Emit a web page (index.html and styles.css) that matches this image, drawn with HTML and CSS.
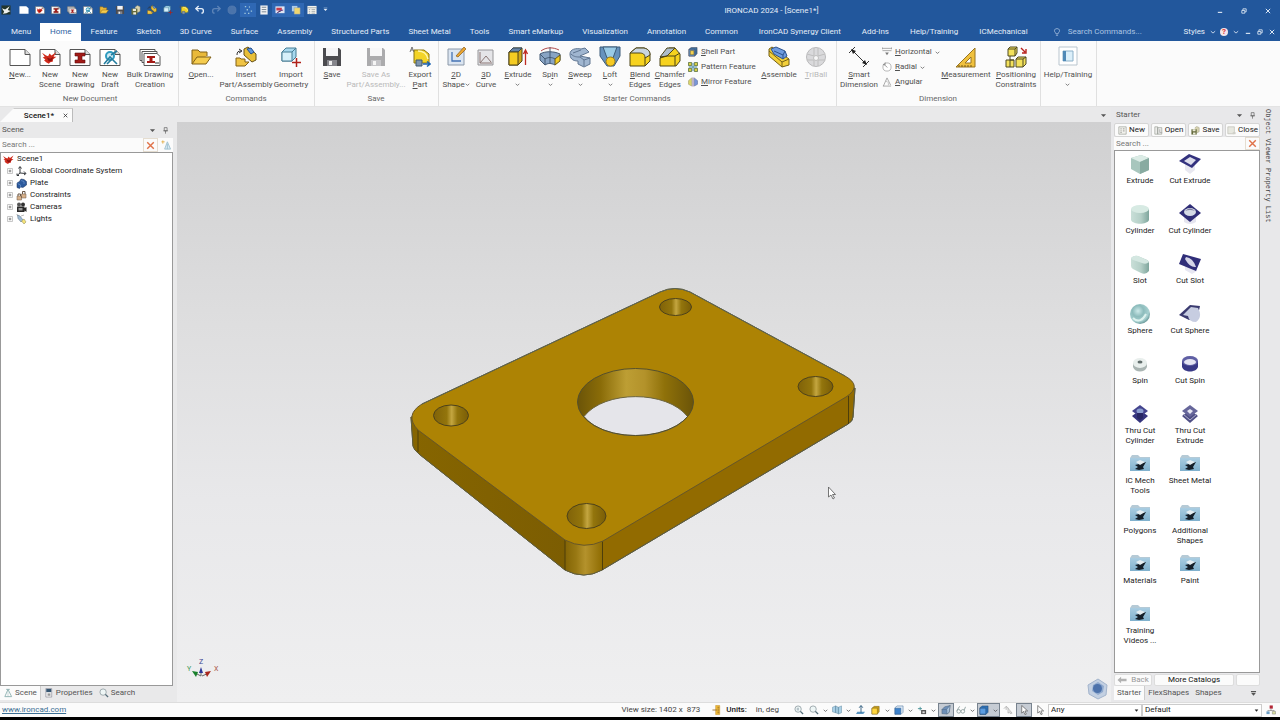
FILE: index.html
```html
<!DOCTYPE html>
<html lang="en">
<head>
<meta charset="utf-8">
<title>IRONCAD 2024 - [Scene1*]</title>
<link rel="stylesheet" href="styles.css">
</head>
<body>
<svg class="defs" aria-hidden="true">
  <defs>
    <linearGradient id="gWall" x1="0" x2="1"><stop offset="0" stop-color="#6b5408"/><stop offset=".2" stop-color="#8a6c08"/><stop offset=".42" stop-color="#bd9e34"/><stop offset=".58" stop-color="#b3922a"/><stop offset=".75" stop-color="#8f7109"/><stop offset="1" stop-color="#6b5408"/></linearGradient>
    <linearGradient id="gHole" x1="0" x2="1"><stop offset="0" stop-color="#806208"/><stop offset=".38" stop-color="#93750c"/><stop offset=".52" stop-color="#c4a640"/><stop offset=".68" stop-color="#93750c"/><stop offset="1" stop-color="#7a5d06"/></linearGradient>
    <linearGradient id="gCorner" x1="0" x2="1"><stop offset="0" stop-color="#836405"/><stop offset=".3" stop-color="#987813"/><stop offset=".55" stop-color="#b4922c"/><stop offset="1" stop-color="#8f6c02"/></linearGradient>
    <linearGradient id="gSide" x1="0" x2="1"><stop offset="0" stop-color="#866500"/><stop offset="1" stop-color="#7c5d02"/></linearGradient>
    <linearGradient id="gMint" x1="0" x2="1"><stop offset="0" stop-color="#c9dfd8"/><stop offset=".55" stop-color="#b4cfc7"/><stop offset="1" stop-color="#7fa69d"/></linearGradient>
    <radialGradient id="gBall" cx=".4" cy=".35" r=".7"><stop offset="0" stop-color="#cdeaea"/><stop offset=".4" stop-color="#8dbcbc"/><stop offset=".75" stop-color="#a6d0d0"/><stop offset="1" stop-color="#5b8b8b"/></radialGradient>
    <linearGradient id="gFold" x1="0" y1="0" x2="0" y2="1"><stop offset="0" stop-color="#a9cde2"/><stop offset="1" stop-color="#7fb0cd"/></linearGradient>
  </defs>
  <symbol id="page" viewBox="0 0 22 22"><path d="M1 3.500h15l5 5v11H1z" fill="#fff" stroke="#555"/><path d="M16 3.500v5h5" fill="#ddd" stroke="#555"/></symbol>
  <symbol id="splat" viewBox="0 0 22 22"><path d="M0 4l6 4 3 1 2-4 3 3 7-5-4 7 4 0-5 4 0 3-4 1-2 2-4-2-3-3 2-1-4-3 3-1z" fill="#d02a1c"/><path d="M7 11l5 2 5-3-3 6-4 1z" fill="#8c1210"/></symbol>
  <symbol id="scene" viewBox="0 0 22 22"><use href="#page"/><use href="#splat" x="3" y="4" width="15" height="15"/></symbol>
  <symbol id="beam" viewBox="0 0 22 22"><path d="M6 7h10v3h-3v4h3v3H6v-3h3v-4H6z" fill="#a31b17" stroke="#5b0f0d" stroke-width=".6"/></symbol>
  <symbol id="drawing" viewBox="0 0 22 22"><use href="#page"/><use href="#beam"/></symbol>
  <symbol id="draft" viewBox="0 0 22 22"><use href="#page"/><circle cx="11" cy="10" r="4" fill="#cfeaf4" stroke="#2f9cc0" stroke-width="2"/><path d="M5 18l6-7 2 2-5 5M12 9l6-4M13 13l5 5" fill="none" stroke="#247d9f" stroke-width="1.600"/></symbol>
  <symbol id="bulk" viewBox="0 0 22 22"><path d="M1 3.500h15v11H1z" fill="#fff" stroke="#555"/><path d="M3 5.500h15v11H3z" fill="#fff" stroke="#555"/><path d="M5 7.500h13l3 3v9H5z" fill="#fff" stroke="#555"/><path d="M8 10h8v2h-2.500v3H16v2H8v-2h2.500v-3H8z" fill="#a31b17"/><path d="M16 16h4v2h-4z" fill="#999"/></symbol>
  <symbol id="open" viewBox="0 0 22 22"><path d="M2 18V4h6l2 2h7v4" fill="#e9b93a" stroke="#806018"/><path d="M2 18l5-7h14l-5 7z" fill="#f5cc4e" stroke="#806018"/></symbol>
  <symbol id="insert" viewBox="0 0 22 22"><path d="M1 20v-8h4l1 1h4v3h4l-4 4z" fill="#f0c445" stroke="#806018"/><path d="M9 3l4-2 8 7v6l-4 2-8-7z" fill="#e8bf38" stroke="#665018"/><path d="M12 3l4-1 3 4-3 2z" fill="#5f95dc" stroke="#234e8c"/><path d="M2 9c0-3 1-4 4-4M4 3l3 2-3 2" fill="none" stroke="#333"/></symbol>
  <symbol id="import" viewBox="0 0 22 22"><path d="M2 6l4-4h10v9l-4 4H2z" fill="#a8d8ee" stroke="#467c94"/><path d="M2 6h10v9H2z" fill="#d7f0fa" stroke="#467c94"/><path d="M12 6l4-4" stroke="#467c94"/><path d="M16.500 12v9M12 16.500h9" stroke="#b02018" stroke-width="1.500"/></symbol>
  <symbol id="save" viewBox="0 0 22 22"><path d="M2 2h16l2 2v16H2z" fill="#4b4b4f"/><path d="M5 2h12v8H5z" fill="#f4f4f6"/><path d="M6 14h10v6H6z" fill="#85858b"/><path d="M8 15h3v4H8z" fill="#eee"/></symbol>
  <symbol id="export" viewBox="0 0 22 22"><path d="M5 4h10l5 4v9H5z" fill="#f3d427" stroke="#8a7412"/><path d="M9 5c5 0 9 3 10 8" fill="none" stroke="#fff7b0" stroke-width="1.500"/><path d="M7 14h6v6H7z" fill="#7f96ae" stroke="#40566c"/><path d="M14 18h6M18 15.500l3 2.500-3 2.500" fill="none" stroke="#1c62b0" stroke-width="1.500"/><path d="M1 6l2-5 2 5M2 4h2" fill="none" stroke="#555" stroke-width=".8"/></symbol>
  <symbol id="shape2d" viewBox="0 0 22 22"><path d="M3 3h16v16H3z" fill="#dbe5f1" stroke="#8b98a8"/><path d="M7 6v9h9" fill="none" stroke="#4673b4" stroke-width="1.300"/><path d="M11 10l8-9 2 2-8 8z" fill="#eba630" stroke="#8a5a18" stroke-width=".7"/></symbol>
  <symbol id="curve3d" viewBox="0 0 22 22"><path d="M3 4h15v15H3z" fill="#e5e5e8" stroke="#969699"/><path d="M5 6v11h12M5 17l6-7 5 6" fill="none" stroke="#8b7775"/></symbol>
  <symbol id="extrude" viewBox="0 0 22 22"><path d="M2 6l4-4h9v13l-4 4H2z" fill="#d1a719" stroke="#4c4318"/><path d="M2 6l4-4h9l-4 4z" fill="#6784a5" stroke="#37485b"/><path d="M2 6h9v13H2z" fill="#f5cc22" stroke="#4c4318"/><path d="M18.500 19V5M16.500 8l2-4 2 4" fill="none" stroke="#bf2a22" stroke-width="1.300"/></symbol>
  <symbol id="spin" viewBox="0 0 22 22"><path d="M1 8c5-3 14-3 20 0v6l-5 5c-4-2-7-2-10 0l-5-5z" fill="#88a4c4" stroke="#435973"/><path d="M16 13l5-4v6l-5 4z" fill="#f2cb21" stroke="#6b5b18"/><path d="M1 8l5 5v6M6 13c3-2 7-2 10 0M11 1v17" fill="none" stroke="#435973"/><path d="M2 5c5-4 12-4 18-1" fill="none" stroke="#b04949"/></symbol>
  <symbol id="sweep" viewBox="0 0 22 22"><path d="M1 8c0-5 6-6 11-5l4-1 4 4-9 4 10 2v6l-6 3-6-3v-3c-6 0-8-3-8-7z" fill="#a0b6d0" stroke="#607692"/><path d="M2 8c3 3 6 3 9 3l4 3v6M15 14l6-2M4 7l8-3" fill="none" stroke="#607692"/></symbol>
  <symbol id="loft" viewBox="0 0 22 22"><path d="M1 1h20v9l-6 10H8L1 10z" fill="#6692bd" stroke="#3b5b78"/><path d="M4 1h14l-4 11H8z" fill="#9acbe6" stroke="#3b5b78"/><circle cx="11.500" cy="15.500" r="4.500" fill="#f6ca23" stroke="#9b7a18"/></symbol>
  <symbol id="blend" viewBox="0 0 22 22"><path d="M1 7l6-5h8c4 1 6 3 6 7v6l-5 5H1z" fill="#f6d21f" stroke="#4d4417"/><path d="M7 2h8c4 1 6 3 6 7l-5 3c0-4-2-5-6-5H1z" fill="#c9d5df" stroke="#4d4417"/><path d="M16 12v8" stroke="#4d4417"/></symbol>
  <symbol id="chamfer" viewBox="0 0 22 22"><path d="M1 12l6-5 3-5h6l5 6v7l-4 5H1z" fill="#f6d21f" stroke="#4d4417"/><path d="M1 11l7-9h8l-8 8z" fill="#aebdcb" stroke="#4d4417"/><path d="M8 10h8l5-3M16 10v10M8 10l-7 2" fill="none" stroke="#4d4417"/></symbol>
  <symbol id="shell" viewBox="0 0 22 22"><path d="M2 5l5-4h13v14l-5 5H2z" fill="#41719f" stroke="#334"/><path d="M2 5h13v15H2z" fill="#6d9ccf" stroke="#334"/><path d="M5 8h8v9H5z" fill="#f5d252" stroke="#55481a"/></symbol>
  <symbol id="pattern" viewBox="0 0 22 22"><path d="M1 1h7v7H1zM14 1h7v7h-7zM1 14h7v7H1zM14 14h7v7h-7z" fill="#d9cf42" stroke="#3d5c31" stroke-width="1.500"/><path d="M11 2v18M2 11h18" stroke="#3b80a0" stroke-width="2"/></symbol>
  <symbol id="mirror" viewBox="0 0 22 22"><path d="M8 2v18l-7-4V8z" fill="#d8d36b" stroke="#8f8c55"/><path d="M14 2v18l7-4V8z" fill="#7995d7" stroke="#46588c"/><path d="M11 1v20" stroke="#7d679c" stroke-width="2"/></symbol>
  <symbol id="assemble" viewBox="0 0 22 22"><path d="M1 3l3-2 17 12v6l-7 2L1 10z" fill="#f3d03a" stroke="#746018"/><path d="M1 5l13 11 7-3M14 16v5" fill="none" stroke="#746018"/><path d="M3 3l5-2 9 4 2 5-4 3-9-5z" fill="#6f9ce0" stroke="#2c538f"/><path d="M6 5l9 4 2-4M15 9v4" fill="none" stroke="#2c538f"/></symbol>
  <symbol id="triball" viewBox="0 0 22 22"><circle cx="11" cy="11" r="9.500" fill="#b4b4b8" stroke="#6c6c70"/><path d="M2 8l7 2V2M13 2v8l7-2M2 14h7v6M13 20v-6h7" fill="none" stroke="#777"/><circle cx="11" cy="12" r="2.500" fill="#f3f3f3" stroke="#777"/></symbol>
  <symbol id="smart" viewBox="0 0 22 22"><path d="M4 4l14 14M1 7l6-6M15 21l6-6" stroke="#333"/><path d="M3 3l5 2-3 3zM19 19l-5-2 3-3z" fill="#222"/></symbol>
  <symbol id="horiz" viewBox="0 0 22 22"><path d="M1 3h20M1 8h20M1 1v4M21 1v4" stroke="#888" stroke-width="1.500"/><path d="M7 12h8l-4 6z" fill="#777"/></symbol>
  <symbol id="radial" viewBox="0 0 22 22"><circle cx="11" cy="11" r="9" fill="#fff" stroke="#999" stroke-width="1.500"/><path d="M4 5l8 7M2 6h5V1" stroke="#777" fill="none" stroke-width="1.500"/></symbol>
  <symbol id="angular" viewBox="0 0 22 22"><path d="M2 20h18M3 20L11 2l8 16" fill="none" stroke="#888" stroke-width="1.500"/><path d="M8 9c5 0 7 5 6 9" fill="none" stroke="#aaa" stroke-width="1.500"/></symbol>
  <symbol id="measure" viewBox="0 0 22 22"><path d="M1 21L20 2v19z" fill="#f0c13e" stroke="#987421"/><path d="M10 17l6-6v6z" fill="#fff" stroke="#987421"/><path d="M4 21v-2m3 2v-2m3 2v-2m3 2v-2m3 2v-2" stroke="#775917"/></symbol>
  <symbol id="position" viewBox="0 0 22 22"><path d="M3 3l2-2h7v6l-2 3H3zM1 14h8v7H1zM11 13l2-2h8v7l-3 3h-7z" fill="#f4e25c" stroke="#4f4a24"/><path d="M3 3h7v7M10 3l2-2M11 13h7v8M18 13l3-2M5 14v7M5 10v4h4" fill="none" stroke="#4f4a24"/><path d="M16 2l4 4M17 7h4V3" fill="none" stroke="#b8201c" stroke-width="1.400"/></symbol>
  <symbol id="help" viewBox="0 0 22 22"><path d="M2 1h18v18H2z" fill="#fff" stroke="#b9c5ce"/><path d="M6 5h10v10H6z" fill="#dbeffa" stroke="#8bb0c9"/><path d="M6 5h3v10H6z" fill="#4f89b7"/></symbol>
  <symbol id="app" viewBox="0 0 22 22"><path d="M1 1h20v20H1z" fill="#21342c"/><path d="M2 7l7 3 10-7-4 8 6 2-9 5-8 1 3-4z" fill="#eef1ee"/></symbol>
  <symbol id="blank" viewBox="0 0 22 22"><path d="M1 3h15l5 4v12H1z" fill="#fff"/></symbol>
  <symbol id="undo" viewBox="0 0 22 22"><path d="M3 8h11c6 0 6 10 0 10M8 2L2 8l6 6" fill="none" stroke="currentColor" stroke-width="3"/></symbol>
  <symbol id="ball" viewBox="0 0 22 22"><circle cx="11" cy="11" r="9" fill="#4b74ab" stroke="#6788b5"/></symbol>
  <symbol id="dots" viewBox="0 0 22 22"><path d="M4 2h3v3H4zM13 3h2v3h-2zM8 9h3v3H8zM3 17h3v3H3zM11 17h3v3h-3zM17 12h3v3h-3z" fill="#9fc6dc"/></symbol>
  <symbol id="list" viewBox="0 0 22 22"><path d="M3 1h16v20H3z" fill="#f2f2f2"/><path d="M6 5h10M6 10h10M6 15h10" stroke="#71808e" stroke-width="2"/></symbol>
  <symbol id="flag" viewBox="0 0 22 22"><path d="M1 3h20v15H1z" fill="#dfe5f4"/><path d="M3 6h12v6H3z" fill="#c73b4b"/><path d="M4 18l6-5 8-2" stroke="#6d3b88" stroke-width="2"/></symbol>
  <symbol id="stack" viewBox="0 0 22 22"><path d="M2 2h12v12H2z" fill="#aecbe8"/><path d="M7 6h13v14H7z" fill="#f0d66e" stroke="#8a9eb4"/></symbol>
  <symbol id="table" viewBox="0 0 22 22"><path d="M1 2h20v18H1z" fill="#f4f4ee"/><path d="M1 6h20M4 10h3M10 10h8M4 14h3M10 14h8M4 18h3M10 18h8" stroke="#8b9499" stroke-width="1.500"/></symbol>
  <symbol id="tree" viewBox="0 0 22 22"><path d="M7 3h8M11 3l-7 16h15z" fill="none" stroke="#8eb2b2" stroke-width="2"/><path d="M11 6v13" stroke="#8eb2b2"/></symbol>
  <symbol id="treenew" viewBox="0 0 22 22"><path d="M14 4L8 20h13zM14 8v12" fill="#dcebf3" stroke="#9dbfce" stroke-width="2"/><path d="M4 1v7M1 4h7" stroke="#e3b04a" stroke-width="2"/></symbol>
  <symbol id="props" viewBox="0 0 22 22"><path d="M4 1h13v19H4z" fill="#efefef" stroke="#667"/><path d="M5 2h11v7H5z" fill="#345571"/><path d="M8 12h6v5H8z" fill="#999"/></symbol>
  <symbol id="mag" viewBox="0 0 22 22"><circle cx="9" cy="9" r="7" fill="#eef6f6" stroke="#8a979c" stroke-width="1.700"/><path d="M14 14l6 6" stroke="#536c78" stroke-width="3"/></symbol>
  <symbol id="magbox" viewBox="0 0 22 22"><use href="#mag"/><path d="M6 6h5v6H6z" fill="#b8c4ca"/></symbol>
  <symbol id="x" viewBox="0 0 22 22"><path d="M3 3l16 16M19 3L3 19" stroke="currentColor" stroke-width="3.500"/></symbol>
  <symbol id="down" viewBox="0 0 22 22"><path d="M3 7h16l-8 9z" fill="currentColor"/></symbol>
  <symbol id="downbar" viewBox="0 0 22 22"><path d="M3 3h16v3H3zM3 9h16l-8 9z" fill="currentColor"/></symbol>
  <symbol id="chev" viewBox="0 0 22 22"><path d="M3 8l8 7 8-7" fill="none" stroke="currentColor" stroke-width="3"/></symbol>
  <symbol id="pin" viewBox="0 0 22 22"><path d="M7 2h9v10H7zM4 12h15M11 12v9" fill="none" stroke="#555" stroke-width="2"/></symbol>
  <symbol id="min" viewBox="0 0 22 22"><path d="M3 16h16" stroke="currentColor" stroke-width="4"/></symbol>
  <symbol id="restore" viewBox="0 0 22 22"><path d="M3 9h11v10H3zM7 9V3h12v11h-5" fill="none" stroke="currentColor" stroke-width="3"/></symbol>
  <symbol id="bulb" viewBox="0 0 22 22"><path d="M8 16c0-4-4-4-4-9 0-7 14-7 14 0 0 5-4 5-4 9zM8 20h6" fill="none" stroke="#b8cce6" stroke-width="2"/></symbol>
  <symbol id="plus" viewBox="0 0 22 22"><path d="M2 2h18v18H2z" fill="#fff" stroke="#aaa" stroke-width="2.500"/><path d="M6 11h10M11 6v10" stroke="#555" stroke-width="2.500"/></symbol>
  <symbol id="coord" viewBox="0 0 22 22"><path d="M8 2v12l11 1M8 14l-6 5M5 5l3-4 3 4M16 11l4 4-4 3M2 15v4h4" fill="none" stroke="#363a3e" stroke-width="2"/></symbol>
  <symbol id="part" viewBox="0 0 22 22"><path d="M2 10l5-3 3-5 6 1 5 4v7l-7 5-5-1-2 3-5-2z" fill="#2c5a9d" stroke="#152f5a"/><path d="M10 5l6 2v5M3 11l6 3v6" fill="none" stroke="#81a9df"/></symbol>
  <symbol id="locks" viewBox="0 0 22 22"><path d="M2 12h9v8H2zM11 8h9v8h-9z" fill="#d7b18a" stroke="#695747"/><path d="M4 12V8h5v4M13 8V3h5v5" fill="none" stroke="#695747" stroke-width="2"/></symbol>
  <symbol id="camera" viewBox="0 0 22 22"><circle cx="6" cy="5" r="4" fill="#555"/><circle cx="14" cy="5" r="4" fill="#333"/><path d="M2 9h15v11H2zM17 12l4-2v10l-4-3z" fill="#292929"/><path d="M5 12h8v5H5z" fill="#999"/></symbol>
  <symbol id="light" viewBox="0 0 22 22"><path d="M3 2l5 2 6 8-4 4-6-7z" fill="#9fbbd4" stroke="#536d84"/><path d="M11 14l5-4 4 6-4 4z" fill="#f6e479" stroke="#8b8556"/><path d="M1 1l4 2M10 4l6-2" stroke="#777"/></symbol>
  <symbol id="sheet" viewBox="0 0 22 22"><path d="M2 2h18v18H2z" fill="#f2f2ed" stroke="#92968c" stroke-width="1.500"/><path d="M6 7h3M12 7h4M6 12h3M12 12h4M6 16h3" stroke="#8b8b87" stroke-width="2"/></symbol>
  <symbol id="book" viewBox="0 0 22 22"><path d="M2 2h7v18H2zM9 4h10v16H9z" fill="#ededeb" stroke="#92968f" stroke-width="1.500"/><path d="M14 8v8h6" fill="none" stroke="#aaa" stroke-width="2"/></symbol>
  <symbol id="savecat" viewBox="0 0 22 22"><path d="M9 5l5-4 6 3v10l-6 3" fill="#d7d2b0" stroke="#8d8a6c"/><path d="M1 8h13v13H1z" fill="#646a3c"/><path d="M4 8h7v5H4zM5 16h6v5H5z" fill="#e9e9d6"/></symbol>
  <symbol id="closecat" viewBox="0 0 22 22"><path d="M2 2h16v17H2z" fill="#e7e8e0" stroke="#b8b9ae" stroke-width="1.500"/><path d="M14 15h7v5h-7z" fill="#cfcfc8"/></symbol>
  <symbol id="cBox" viewBox="0 0 22 22"><path d="M2 5l10-3 8 3v12l-9 4-9-5z" fill="#a8c6bd"/><path d="M2 5l10-3 8 3-9 4z" fill="#dcece6"/><path d="M11 9l9-4v12l-9 4z" fill="#88aba1"/></symbol>
  <symbol id="cCyl" viewBox="0 0 22 22"><path d="M2 6v11c2 5 16 5 18 0V6z" fill="url(#gMint)"/><ellipse cx="11" cy="6" rx="9" ry="4" fill="#d7eae3"/></symbol>
  <symbol id="cSlot" viewBox="0 0 22 22"><path d="M2 5q3-3 7-2l9 4q2 1 2 3v8q-3 4-8 2l-8-4q-2-1-2-3z" fill="url(#gMint)"/><path d="M2 5q3-3 7-2l9 4q2 1 2 2-3 3-7 1L4 7Q2 6 2 5z" fill="#d4e7e1"/></symbol>
  <symbol id="cBall" viewBox="0 0 22 22"><circle cx="11" cy="11" r="10" fill="url(#gBall)"/><path d="M4 15c5 5 10 2 13-4" fill="none" stroke="#ddf2ee" stroke-width="2"/></symbol>
  <symbol id="cSpin" viewBox="0 0 22 22"><path d="M4 10v4c2 6 12 6 14 0v-4z" fill="#aab5b3"/><ellipse cx="11" cy="10" rx="7" ry="5" fill="#e9efed"/><ellipse cx="11" cy="9" rx="2.500" ry="1.500" fill="#606c6b"/></symbol>
  <symbol id="xBox" viewBox="0 0 22 22"><path d="M6 10l10 2v5l-5 4-5-4z" fill="#e8e8f0"/><path d="M0 8l10-7 12 5-9 9z" fill="#33327e"/><path d="M5 8l6-4 6 3-5 5z" fill="#dcddeb"/></symbol>
  <symbol id="xCyl" viewBox="0 0 22 22"><path d="M5 12h12v7q-6 4-12 0z" fill="#e5e5ef"/><path d="M0 10L11 1l11 9-11 9z" fill="#302e77"/><ellipse cx="11" cy="9" rx="6" ry="4" fill="#d5dbe6"/><path d="M6 8q5-5 10 0-5-2-10 0" fill="#7b7a9f"/></symbol>
  <symbol id="xSlot" viewBox="0 0 22 22"><path d="M6 12l12 2v4l-5 3-7-4z" fill="#e7e7f2"/><path d="M4 1l18 5-5 12L0 11z" fill="#302e79"/><path d="M7 4q7 1 10 10-6 1-11-8z" fill="#d5d5e8"/></symbol>
  <symbol id="xBall" viewBox="0 0 22 22"><path d="M0 12L11 2l10 1-3 13-8 1z" fill="#3b3b70"/><path d="M4 12l8-8 7 1q5 9-2 14-7 0-8-6z" fill="#c7cde1"/></symbol>
  <symbol id="xSpin" viewBox="0 0 22 22"><path d="M3 8v6c2 6 14 6 16 0V8z" fill="#393986"/><ellipse cx="11" cy="8" rx="8" ry="5" fill="#5f5fa4"/><ellipse cx="11" cy="9" rx="6" ry="3" fill="#e5e5f3"/></symbol>
  <symbol id="thru" viewBox="0 0 22 22"><path d="M3 13l8-6 8 6-8 7z" fill="#35347d"/><path d="M3 8l8-6 8 6-8 6z" fill="#44448e"/><ellipse cx="11" cy="8" rx="3.500" ry="2.500" fill="#8b9ed0"/><path d="M8 10h6v5l-3 2-3-2z" fill="#282765"/></symbol>
  <symbol id="thruE" viewBox="0 0 22 22"><path d="M3 13l8-6 8 6-8 7z" fill="#4e4e85"/><path d="M3 8l8-6 8 6-8 6z" fill="#66669a"/><path d="M8 8l3-2 3 2-3 3z" fill="#e6e6f2"/><path d="M4 11l7 6 7-6" fill="none" stroke="#b0b0cc"/></symbol>
  <symbol id="folder" viewBox="0 0 22 22"><path d="M1 5l2-3h6l2 2h10v5H1z" fill="#b5cad6"/><path d="M1 5h20v13H1z" fill="url(#gFold)"/><path d="M6 12l4-1 7-2-3 5 1 2-5 1-4-1 3-2z" fill="#151f29"/><path d="M7 9l4-2 5 2-5 3z" fill="#e6eef2"/></symbol>
  <symbol id="back" viewBox="0 0 22 22"><path d="M1 11l8-7v4h12v6H9v4z" fill="#b2b2b2"/></symbol>
  <symbol id="ruler" viewBox="0 0 22 22"><path d="M8 1h9v20H8z" fill="#f1bb35" stroke="#bd8823"/><path d="M1 11h10M12 5h4M12 9h4M12 13h4M12 17h4" stroke="#99712e" stroke-width="2"/></symbol>
  <symbol id="views" viewBox="0 0 22 22"><path d="M1 5l7-3v15l-7-2zM8 2l6 3v14l-6-2zM14 5l7-3v15l-7 3z" fill="#a9d0e7" stroke="#568099"/></symbol>
  <symbol id="axis" viewBox="0 0 22 22"><path d="M3 15h17l-4 5H0z" fill="#5a95c1"/><path d="M11 2v15M7 6l4-5 4 5" fill="none" stroke="#2c597c" stroke-width="2"/></symbol>
  <symbol id="ybox" viewBox="0 0 22 22"><path d="M2 7l5-4h11v12l-4 5H2z" fill="#c79e1c" stroke="#715c18"/><path d="M2 7h12v13H2z" fill="#ffd63d" stroke="#715c18"/></symbol>
  <symbol id="bbox" viewBox="0 0 22 22"><path d="M2 6l5-4h13v14l-5 5H2z" fill="#dbe8f5" stroke="#315d8c"/><path d="M2 7h13v13H2z" fill="#3e82cb" stroke="#315d8c"/></symbol>
  <symbol id="bboxf" viewBox="0 0 22 22"><path d="M2 6l5-4h13v14l-5 5H2z" fill="#2f72b7" stroke="#183f68"/><path d="M2 7h13v13H2z" fill="#5b9ce0" stroke="#183f68"/></symbol>
  <symbol id="movecam" viewBox="0 0 22 22"><path d="M2 8h9M7 4v8" stroke="#4a9298" stroke-width="2"/><path d="M9 11h11v9H9z" fill="#555"/><path d="M12 14h5v4h-5z" fill="#ddd"/></symbol>
  <symbol id="glass" viewBox="0 0 22 22"><path d="M2 10l6-6 12-3-2 15-5 4-11-1z" fill="#6d8fb8" stroke="#4c6177"/><path d="M2 10h10l8-9-2 15-5 4V10" fill="#a9c3df" stroke="#4c6177"/></symbol>
  <symbol id="specs" viewBox="0 0 22 22"><circle cx="6" cy="14" r="4" fill="none" stroke="#90a0a0" stroke-width="2"/><circle cx="15" cy="14" r="4" fill="none" stroke="#90a0a0" stroke-width="2"/><path d="M2 12L8 3M18 11l3-7" stroke="#90a0a0" stroke-width="2"/></symbol>
  <symbol id="arrow" viewBox="0 0 22 22"><path d="M6 1v17l4-4 3 7 3-1-3-7h6z" fill="#fff" stroke="#555" stroke-width="1.500"/></symbol>
  <symbol id="pick" viewBox="0 0 22 22"><path d="M2 8l5-5 5 4M7 3v8M11 7l9 11-4 1-1-4-4 3z" fill="#eee" stroke="#a8a8a8" stroke-width="1.500"/></symbol>
  <symbol id="org" viewBox="0 0 22 22"><path d="M8 1h7v7H8z" fill="#b22635"/><path d="M11 8v5M4 14v-2h14v2" fill="none" stroke="#555"/><path d="M1 14h7v6H1z" fill="#6b9ec5"/><path d="M14 14h7v6h-7z" fill="#d9dfa1" stroke="#777"/></symbol>
</svg>

<header class="top">
  <div class="titlebar">
    <div class="quick">
      <button aria-label="Application"><svg><use href="#app"/></svg></button>
      <button aria-label="New"><svg><use href="#blank"/></svg></button>
      <button aria-label="New scene"><svg><use href="#scene"/></svg></button>
      <button aria-label="New drawing"><svg><use href="#drawing"/></svg></button>
      <button aria-label="Bulk drawing"><svg><use href="#bulk"/></svg></button>
      <button aria-label="New draft"><svg><use href="#draft"/></svg></button>
      <button aria-label="Open"><svg><use href="#open"/></svg></button>
      <button aria-label="Save"><svg><use href="#save"/></svg></button>
      <button aria-label="Save as"><svg><use href="#savecat"/></svg></button>
      <button aria-label="Insert"><svg><use href="#insert"/></svg></button>
      <button aria-label="Import"><svg><use href="#import"/></svg></button>
      <button aria-label="Export"><svg><use href="#export"/></svg></button>
      <button aria-label="Undo"><svg><use href="#undo"/></svg></button>
      <button aria-label="Redo" class="dim flip"><svg><use href="#undo"/></svg></button>
      <button aria-label="TriBall"><svg><use href="#ball"/></svg></button>
      <button aria-label="Snap" class="lit"><svg><use href="#dots"/></svg></button>
      <button aria-label="List"><svg><use href="#list"/></svg></button>
      <button aria-label="Markup" class="lit"><svg><use href="#flag"/></svg></button>
      <button aria-label="Layers" class="lit"><svg><use href="#stack"/></svg></button>
      <button aria-label="Properties"><svg><use href="#table"/></svg></button>
      <button aria-label="Customize" class="mini"><svg><use href="#downbar"/></svg></button>
    </div>
    <h1>IRONCAD 2024 - [Scene1*]</h1>
    <div class="winbtns">
      <button aria-label="Minimize"><svg><use href="#min"/></svg></button>
      <button aria-label="Restore"><svg><use href="#restore"/></svg></button>
      <button aria-label="Close"><svg><use href="#x"/></svg></button>
    </div>
  </div>
  <div class="menubar">
    <nav class="menu"><button>Menu</button><button class="active">Home</button><button>Feature</button><button>Sketch</button><button>3D Curve</button><button>Surface</button><button>Assembly</button><button>Structured Parts</button><button>Sheet Metal</button><button>Tools</button><button>Smart eMarkup</button><button>Visualization</button><button>Annotation</button></nav>
    <nav class="menu addons"><button>Common</button><button>IronCAD Synergy Client</button><button>Add-Ins</button><button>Help/Training</button><button>ICMechanical</button></nav>
    <label class="cmdsearch"><svg><use href="#bulb"/></svg><input type="text" placeholder="Search Commands..." aria-label="Search Commands"></label>
    <div class="docbtns">
      <button class="styles">Styles <svg><use href="#chev"/></svg></button>
      <button aria-label="Help"><span class="q">?</span></button>
      <button aria-label="Help options"><svg><use href="#chev"/></svg></button>
      <button aria-label="Minimize document"><svg><use href="#min"/></svg></button>
      <button aria-label="Restore document"><svg><use href="#restore"/></svg></button>
      <button aria-label="Close document"><svg><use href="#x"/></svg></button>
    </div>
  </div>
</header>

<section class="ribbon">
  <div class="group"><div class="cmds">
    <button class="cmd"><svg><use href="#page"/></svg><span><u>N</u>ew...</span></button>
    <button class="cmd"><svg><use href="#scene"/></svg><span>New<br>Scene</span></button>
    <button class="cmd"><svg><use href="#drawing"/></svg><span>New<br>Drawing</span></button>
    <button class="cmd"><svg><use href="#draft"/></svg><span>New<br>Draft</span></button>
    <button class="cmd w50"><svg><use href="#bulk"/></svg><span>Bulk Drawing<br>Creation</span></button>
  </div><h2>New Document</h2></div>
  <div class="group"><div class="cmds">
    <button class="cmd w40"><svg><use href="#open"/></svg><span><u>O</u>pen...</span></button>
    <button class="cmd w50"><svg><use href="#insert"/></svg><span>Insert<br>Part/Assembly</span></button>
    <button class="cmd w40"><svg><use href="#import"/></svg><span>Import<br>Geometry</span></button>
  </div><h2>Commands</h2></div>
  <div class="group"><div class="cmds">
    <button class="cmd"><svg><use href="#save"/></svg><span><u>S</u>ave</span></button>
    <button class="cmd w58" disabled><svg><use href="#save"/></svg><span>Save As<br>Part/Assembly...</span></button>
    <button class="cmd"><svg><use href="#export"/></svg><span>Export<br><u>P</u>art</span></button>
  </div><h2>Save</h2></div>
  <div class="group"><div class="cmds">
    <button class="cmd"><svg><use href="#shape2d"/></svg><span><u>2</u>D<br>Shape<svg class="car"><use href="#chev"/></svg></span></button>
    <button class="cmd"><svg><use href="#curve3d"/></svg><span><u>3</u>D<br>Curve</span></button>
    <button class="cmd w34"><svg><use href="#extrude"/></svg><span><u>E</u>xtrude<br><svg class="car"><use href="#chev"/></svg></span></button>
    <button class="cmd"><svg><use href="#spin"/></svg><span>Sp<u>i</u>n<br><svg class="car"><use href="#chev"/></svg></span></button>
    <button class="cmd"><svg><use href="#sweep"/></svg><span><u>S</u>weep<br><svg class="car"><use href="#chev"/></svg></span></button>
    <button class="cmd"><svg><use href="#loft"/></svg><span><u>L</u>oft<br><svg class="car"><use href="#chev"/></svg></span></button>
    <button class="cmd"><svg><use href="#blend"/></svg><span><u>B</u>lend<br>Edges</span></button>
    <button class="cmd"><svg><use href="#chamfer"/></svg><span><u>C</u>hamfer<br>Edges</span></button>
    <div class="stackcol w74">
      <button><svg><use href="#shell"/></svg><span><u>S</u>hell Part</span></button>
      <button><svg><use href="#pattern"/></svg><span>Pattern Feature</span></button>
      <button><svg><use href="#mirror"/></svg><span><u>M</u>irror Feature</span></button>
    </div>
    <button class="cmd w40"><svg><use href="#assemble"/></svg><span><u>A</u>ssemble</span></button>
    <button class="cmd w34" disabled><svg><use href="#triball"/></svg><span><u>T</u>riBall</span></button>
  </div><h2>Starter Commands</h2></div>
  <div class="group"><div class="cmds">
    <button class="cmd w40"><svg><use href="#smart"/></svg><span><u>S</u>mart<br>Dimension</span></button>
    <div class="stackcol w58">
      <button><svg><use href="#horiz"/></svg><span><u>H</u>orizontal</span><svg class="car"><use href="#chev"/></svg></button>
      <button><svg><use href="#radial"/></svg><span><u>R</u>adial</span><svg class="car"><use href="#chev"/></svg></button>
      <button><svg><use href="#angular"/></svg><span><u>A</u>ngular</span></button>
    </div>
    <button class="cmd w58"><svg><use href="#measure"/></svg><span><u>M</u>easurement</span></button>
    <button class="cmd w42"><svg><use href="#position"/></svg><span><u>P</u>ositioning<br>Constraints</span></button>
  </div><h2>Dimension</h2></div>
  <div class="group"><div class="cmds">
    <button class="cmd w50"><svg><use href="#help"/></svg><span>Help/Training<br><svg class="car"><use href="#chev"/></svg></span></button>
  </div></div>
</section>

<main class="work">
  <div class="docarea">
    <div class="doctabs">
      <div class="doctab"><b>Scene1*</b><button aria-label="Close tab"><svg><use href="#x"/></svg></button></div>
      <button class="tablist" aria-label="Tab list"><svg><use href="#down"/></svg></button>
    </div>
    <div class="docbody">
      <aside class="scene">
        <div class="phead"><span>Scene</span><button aria-label="Panel menu"><svg><use href="#down"/></svg></button><button aria-label="Pin"><svg><use href="#pin"/></svg></button></div>
        <div class="search"><input type="text" placeholder="Search ..." aria-label="Search scene"><button class="clear" aria-label="Clear"><svg><use href="#x"/></svg></button><button aria-label="Filter"><svg><use href="#treenew"/></svg></button></div>
        <ul class="tree">
          <li class="root"><svg><use href="#splat"/></svg>Scene1</li>
          <li><button aria-label="Expand"><svg><use href="#plus"/></svg></button><svg><use href="#coord"/></svg>Global Coordinate System</li>
          <li><button aria-label="Expand"><svg><use href="#plus"/></svg></button><svg><use href="#part"/></svg>Plate</li>
          <li><button aria-label="Expand"><svg><use href="#plus"/></svg></button><svg><use href="#locks"/></svg>Constraints</li>
          <li><button aria-label="Expand"><svg><use href="#plus"/></svg></button><svg><use href="#camera"/></svg>Cameras</li>
          <li><button aria-label="Expand"><svg><use href="#plus"/></svg></button><svg><use href="#light"/></svg>Lights</li>
        </ul>
        <div class="ptabs"><button class="active"><svg><use href="#tree"/></svg>Scene</button><button><svg><use href="#props"/></svg>Properties</button><button><svg><use href="#mag"/></svg>Search</button></div>
      </aside>
      <div class="viewport">
        <svg viewBox="177 122 934 580" role="img" aria-label="Plate model">
          <path d="M411 417L413 446Q414 450 419 454L565 570Q584 580 602 570L848 424Q853 421 853 417L855 388Z" fill="#926b00" stroke="#55553c"/>
          <path d="M411 417L413 446Q414 450 419 454L565 570V535Z" fill="url(#gSide)"/>
          <path d="M565 536V570Q584 580 602 570V536Z" fill="url(#gCorner)"/>
          <path d="M411 417L413 446Q414 450 419 454L565 570Q584 580 602 570L848 424Q853 421 853 417L855 388" fill="none" stroke="#5f5d3f" stroke-width="1"/>
          <path d="M418 430V452M565 540V570M602.500 541V570M848.500 396V424" stroke="#4d3e0b" fill="none"/>
          <path d="M422 404L660 292Q675 285 690 292L845 376Q863 386 846 397L603 541Q584 550 565 540L418 430Q404 415 422 404Z" fill="#ad8304" stroke="#66562a"/>
          <path d="M422 404L660 292Q675 285 690 292L845 376" fill="none" stroke="#5c6554"/>
          <ellipse cx="635.500" cy="402" rx="58" ry="33.500" fill="url(#gWall)"/>
          <path d="M584 416.500C604 390 667 390 687.500 416.500C667 442 604 442 584 416.500Z" fill="#e5e5ea" stroke="#6b643f"/>
          <ellipse cx="635.500" cy="402" rx="58" ry="33.500" fill="none" stroke="#56502c"/>
          <g fill="url(#gHole)" stroke="#4d421c"><ellipse cx="451" cy="415.500" rx="17.500" ry="10.500"/><ellipse cx="675.500" cy="307" rx="16" ry="8.500"/><ellipse cx="815.500" cy="386.500" rx="17.500" ry="10"/><ellipse cx="586.500" cy="516" rx="19.500" ry="12.500"/></g>
          <path d="M828.500 487v10l2.500-2 2 4 1.500-1-2-3.500h3z" fill="#fff" stroke="#555" stroke-width=".8"/>
          <path d="M201 676l-6-3M202 676l7-3M201 676v-4" stroke="#666"/>
          <path d="M198 672l-6-1 4 6z" fill="#18802c"/><path d="M205 672l6-1-4 6z" fill="#a8271d"/><path d="M201 667l2 6h-4z" fill="#2b3698"/>
          <g class="axes"><text x="187" y="671" fill="#3f9a57">Y</text><text x="199" y="664" fill="#3c3f8e">Z</text><text x="214" y="671" fill="#a95547">X</text></g>
          <path d="M1098 679l9 6-1 10-8 4-9-5-1-9z" fill="#c3d0e2" stroke="#a3b4cc"/><path d="M1093 685l5-3 6 4-1 6-5 3-6-4z" fill="#8fa9ce"/><circle cx="1097.500" cy="688.500" r="4.500" fill="#4d72ab"/>
        </svg>
      </div>
    </div>
  </div>
  <aside class="catalog">
    <div class="phead"><span>Starter</span><button aria-label="Panel menu"><svg><use href="#down"/></svg></button><button aria-label="Pin"><svg><use href="#pin"/></svg></button></div>
    <div class="cattools"><button><svg><use href="#sheet"/></svg>New</button><button><svg><use href="#book"/></svg>Open</button><button><svg><use href="#savecat"/></svg>Save</button><button><svg><use href="#closecat"/></svg>Close</button></div>
    <div class="search"><input type="text" placeholder="Search ..." aria-label="Search catalog"><button class="clear" aria-label="Clear"><svg><use href="#x"/></svg></button></div>
    <div class="items">
      <button><svg><use href="#cBox"/></svg>Extrude</button><button><svg><use href="#xBox"/></svg>Cut Extrude</button>
      <button><svg><use href="#cCyl"/></svg>Cylinder</button><button><svg><use href="#xCyl"/></svg>Cut Cylinder</button>
      <button><svg><use href="#cSlot"/></svg>Slot</button><button><svg><use href="#xSlot"/></svg>Cut Slot</button>
      <button><svg><use href="#cBall"/></svg>Sphere</button><button><svg><use href="#xBall"/></svg>Cut Sphere</button>
      <button><svg><use href="#cSpin"/></svg>Spin</button><button><svg><use href="#xSpin"/></svg>Cut Spin</button>
      <button><svg><use href="#thru"/></svg>Thru Cut<br>Cylinder</button><button><svg><use href="#thruE"/></svg>Thru Cut<br>Extrude</button>
      <button><svg><use href="#folder"/></svg>IC Mech<br>Tools</button><button><svg><use href="#folder"/></svg>Sheet Metal</button>
      <button><svg><use href="#folder"/></svg>Polygons</button><button><svg><use href="#folder"/></svg>Additional<br>Shapes</button>
      <button><svg><use href="#folder"/></svg>Materials</button><button><svg><use href="#folder"/></svg>Paint</button>
      <button><svg><use href="#folder"/></svg>Training<br>Videos ...</button>
    </div>
    <div class="catnav"><button class="bk" disabled><svg><use href="#back"/></svg>Back</button><button class="more">More Catalogs</button><button class="fwd" aria-label="Forward" disabled></button></div>
    <div class="ptabs"><button class="active">Starter</button><button>FlexShapes</button><button>Shapes</button><button class="end" aria-label="More tabs"><svg><use href="#downbar"/></svg></button></div>
  </aside>
  <div class="strip"><button>Object Viewer</button><button>Property List</button></div>
</main>

<footer class="status">
  <a href="#">www.ironcad.com</a>
  <div class="info"><span>View size: 1402 x&nbsp; 873</span><svg><use href="#ruler"/></svg><b>Units:</b><span class="units">in, deg</span></div>
  <div class="tools">
    <button aria-label="Zoom window"><svg><use href="#magbox"/></svg></button>
    <button aria-label="Zoom"><svg><use href="#mag"/></svg><svg class="car"><use href="#chev"/></svg></button>
    <button aria-label="Views"><svg><use href="#views"/></svg><svg class="car"><use href="#chev"/></svg></button>
    <button aria-label="Look at"><svg><use href="#axis"/></svg></button>
    <button aria-label="Box"><svg><use href="#ybox"/></svg><svg class="car"><use href="#chev"/></svg></button>
    <button aria-label="Render"><svg><use href="#bbox"/></svg><svg class="car"><use href="#chev"/></svg></button>
    <button aria-label="Camera"><svg><use href="#movecam"/></svg><svg class="car"><use href="#chev"/></svg></button>
    <button aria-label="Perspective" class="on"><svg><use href="#glass"/></svg></button>
    <button aria-label="Show"><svg><use href="#specs"/></svg><svg class="car"><use href="#chev"/></svg></button>
    <button aria-label="Shaded" class="on"><svg><use href="#bboxf"/></svg><svg class="car"><use href="#chev"/></svg></button>
    <button aria-label="Pick"><svg><use href="#pick"/></svg></button>
    <button aria-label="Select" class="on"><svg><use href="#arrow"/></svg></button>
    <button aria-label="Filter"><svg><use href="#arrow"/></svg></button>
  </div>
  <div class="combo any"><select aria-label="Selection filter"><option>Any</option></select><svg><use href="#down"/></svg></div>
  <div class="combo"><select aria-label="Configuration"><option>Default</option></select><svg><use href="#down"/></svg></div>
  <button class="org" aria-label="Structure"><svg><use href="#org"/></svg></button>
</footer>
</body>
</html>
```

FILE: styles.css
```css
* { box-sizing: border-box; }
body {
  margin: 0;
  height: 100vh;
  display: flex;
  flex-direction: column;
  font-family: Roboto, "Open Sans", sans-serif;
  font-size: 8px;
  line-height: 10px;
  color: #333;
  background: #e8e8ea;
  border-bottom: 3px solid #000;
  overflow: hidden;
}
.defs { position: absolute; width: 0; height: 0; }
button, input, select { font: inherit; color: inherit; border: 0; padding: 0; margin: 0; background: none; border-radius: 0; }
input, select { min-width: 0; }
button { display: flex; align-items: center; justify-content: center; white-space: nowrap; }
svg { width: 10px; height: 10px; flex: none; }
h1, h2 { margin: 0; font-size: 8px; font-weight: 400; }
.car, .mini svg { width: 5px; height: 5px; }

.top { background: #22579c; color: #e4edf8; }
.titlebar { height: 23px; display: grid; grid-template-columns: 336px 1fr auto; }
.titlebar h1 { line-height: 22px; padding-right: 8px; text-align: center; }
.quick { display: flex; align-items: center; height: 19px; }
.quick button { width: 16px; height: 14px; }
.quick button:first-child { justify-content: flex-start; padding-left: 1px; }
.quick .mini { width: 10px; }
.quick .lit { background: #2f68b4; }
.dim { color: #5c83b7; }
.flip svg { transform: scaleX(-1); }
.winbtns { display: flex; gap: 14px; padding-right: 7px; }
.winbtns button { width: 10px; height: 22px; }
.winbtns svg, .docbtns svg { width: 6px; height: 6px; }
.menubar { height: 18px; display: flex; padding-left: 1px; }
.menu { display: flex; }
.menu button { padding: 0 9px 0 10px; }
.addons button { padding: 0 11px 0 10px; }
.menu .active { background: #fff; color: #2c62a3; }
.cmdsearch { display: flex; align-items: center; gap: 7px; margin-left: 14px; flex: 1; }
.cmdsearch svg { width: 8px; height: 8px; }
.cmdsearch input { flex: 1; width: 80px; }
.cmdsearch input::placeholder { color: #aac3e2; opacity: 1; }
.docbtns { display: flex; align-items: center; gap: 4px; padding-right: 4px; }
.docbtns button { min-width: 8px; }
.docbtns .styles { gap: 5px; }
.q { width: 8px; height: 8px; line-height: 8px; border-radius: 4px; background: #f3e6ea; color: #d33; font-weight: 700; }

.ribbon { display: flex; height: 66px; background: #fbfbfb; border-bottom: 1px solid #e3e3e3; color: #505050; }
.group { display: flex; flex-direction: column; border-right: 1px solid #e0e0e0; padding: 5px 3px 1px 2px; }
.group:first-child { padding-left: 5px; }
.cmds { display: flex; flex: 1; }
.cmd { flex-direction: column; justify-content: flex-start; width: 30px; gap: 2px; }
.cmd > svg { width: 22px; height: 22px; }
.cmd:disabled { color: #b9b9b9; }
.cmd:disabled svg { opacity: .45; }
.w34 { width: 34px; }
.w40 { width: 40px; }
.w42 { width: 42px; }
.w50 { width: 50px; }
.w58 { width: 58px; }
.w74 { width: 74px; }
.stackcol { display: flex; flex-direction: column; gap: 5px; padding: 1px 0 0 3px; }
.stackcol button { gap: 3px; justify-content: flex-start; }
.group h2 { text-align: center; color: #666; line-height: 12px; }

.work { flex: 1; min-height: 0; display: flex; }
.docarea { flex: 1; display: flex; flex-direction: column; min-width: 0; }
.doctabs { height: 15px; display: flex; justify-content: space-between; padding-top: 1px; background: #e9e9ea; }
.doctab { width: 73px; display: flex; align-items: center; justify-content: flex-end; gap: 9px; padding-right: 4px; background: #fbfbfb; clip-path: polygon(14px 0, 100% 0, 100% 100%, 0 100%); border-right: 1px solid #bbb; border-top: 1px solid #ccc; }
.doctab b { font-weight: 500; color: #111; }
.doctab svg { width: 5px; height: 5px; }
.tablist { width: 15px; color: #555; }
.tablist svg, .phead svg, .ptabs .end svg { width: 7px; height: 7px; }
.docbody { flex: 1; min-height: 0; display: flex; }
.scene { width: 177px; display: flex; flex-direction: column; padding-right: 4px; background: #e9e9ea; }
.phead { height: 16px; display: flex; align-items: center; padding: 0 1px 0 2px; color: #555; }
.phead span { flex: 1; }
.phead button { width: 13px; }
.search { height: 14px; display: flex; background: #fbfbfb; }
.search input { flex: 1; padding: 0 2px; }
.search input::placeholder { color: #777; opacity: 1; }
.search button { width: 15px; }
.search .clear { color: #e07248; border: 1px solid #e5ddd0; }
.clear svg { width: 9px; height: 9px; }
.tree { flex: 1; margin: 0; padding: 0; list-style: none; background: #fff; border: 1px solid #999; color: #222; }
.tree li { height: 12px; display: flex; align-items: center; gap: 3px; padding-left: 5px; }
.tree li.root { padding-left: 2px; }
.tree li > svg { width: 11px; height: 11px; }
.tree button { width: 7px; }
.tree button svg { width: 6px; height: 6px; }
.ptabs { height: 16px; display: flex; padding-bottom: 2px; color: #555; }
.ptabs button { padding: 0 3px; gap: 2px; }
.ptabs .active { background: #fbfbfb; border-right: 1px solid #ccc; }
.ptabs .end { margin-left: auto; }
.viewport { flex: 1; min-width: 0; background: linear-gradient(#d0d0d1, #dededf 35%, #e8e8ea 65%, #efeff0); }
.viewport svg { display: block; width: 100%; height: 100%; }
.axes { font-size: 7px; }

.catalog { width: 149px; display: flex; flex-direction: column; padding-left: 3px; }
.catalog .search { height: 13px; }
.cattools { height: 14px; display: grid; grid-template-columns: repeat(4, 1fr); gap: 2px; color: #222; }
.cattools button { background: #fbfbfb; border: 1px solid #d5d5d5; border-radius: 2px; gap: 2px; }
.cattools svg { width: 9px; height: 9px; }
.items { flex: 1; display: grid; grid-template-columns: 50px 50px; grid-auto-rows: 50px; align-content: start; padding-top: 2px; border: 1px solid #999; background: #fff; color: #222; }
.items button { flex-direction: column; justify-content: flex-start; text-align: center; }
.items svg { width: 22px; height: 22px; margin-bottom: 1px; }
.catnav { height: 13px; display: flex; gap: 2px; padding-top: 1px; }
.catnav button { background: #fbfbfb; border: 1px solid #ddd; border-radius: 2px; }
.catnav .bk { width: 38px; gap: 4px; color: #999; }
.catnav .more { width: 80px; color: #111; }
.catnav .fwd { flex: 1; }
.strip { width: 20px; display: flex; flex-direction: column; align-items: flex-start; gap: 4px; padding: 2px 0 0 3px; }
.strip button { writing-mode: vertical-rl; font-family: "Liberation Mono", monospace; font-size: 7px; color: #444; }

.status { height: 15px; display: flex; align-items: center; background: #fbfbfb; border-top: 1px solid #ddd; color: #444; }
.status a { color: #3b6f94; padding-left: 2px; flex: 1; }
.info { display: flex; align-items: center; gap: 4px; padding-right: 12px; }
.info svg { margin-left: 8px; }
.info b { font-weight: 500; color: #222; }
.units { padding-left: 5px; }
.tools { display: flex; height: 14px; }
.tools button { min-width: 16px; gap: 4px; padding: 0 2px; }
.tools .on { background: #c6ccd4; border: 1px solid #77828e; padding: 0 1px; }
.combo { display: grid; align-items: center; width: 120px; border: 1px solid #ccc; height: 13px; background: #fff; color: #222; }
.combo.any { width: 94px; }
.combo select { appearance: none; grid-area: 1 / 1; width: 100%; padding-left: 2px; }
.combo svg { grid-area: 1 / 1; justify-self: end; width: 5px; height: 5px; margin-right: 2px; pointer-events: none; }
.org { width: 18px; }
```
